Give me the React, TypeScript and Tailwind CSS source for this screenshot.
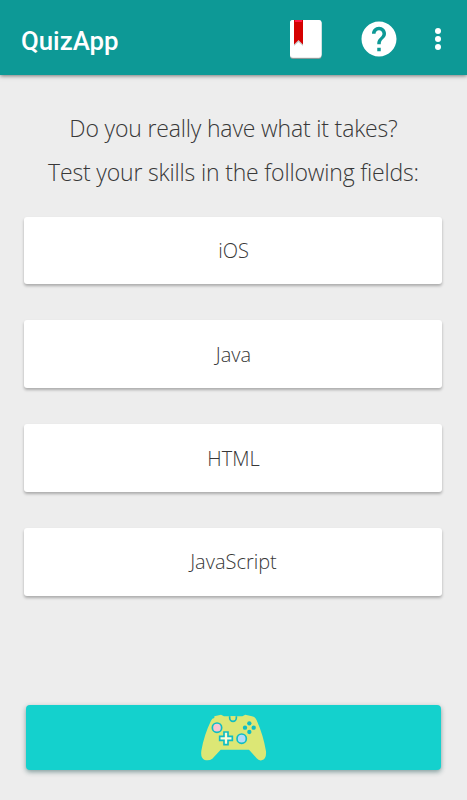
const fields = ["iOS", "Java", "HTML", "JavaScript"];

function BookIcon() {
  return (
    <svg width="34" height="42" viewBox="0 0 34 42" className="block">
      <rect x="1" y="3" width="31.500" height="38" rx="3" fill="#8b9a99" />
      <rect x="1" y="2" width="31.500" height="38" rx="3" fill="#ededed" />
      <rect x="1" y="2" width="31.500" height="37" rx="3" fill="#fff" />
      <path d="M5 23l4.500-4 4.500 4v5l-4.500-4L5 28z" fill="#c9c9c9" />
      <path d="M5 2h9v24.500l-4.500-4.500L5 26.500z" fill="#d50000" />
      <path d="M6 2h7v2H6z" fill="#ff1744" />
    </svg>
  );
}

function HelpIcon() {
  return (
    <svg width="42" height="42" viewBox="0 0 24 24" fill="#fff" className="block">
      <path d="M12 2C6.48 2 2 6.48 2 12s4.48 10 10 10 10-4.48 10-10S17.520 2 12 2zm1 17h-2v-2h2v2zm2.070-7.750-.9.920C13.450 12.900 13 13.500 13 15h-2v-.5c0-1.100.45-2.100 1.170-2.830l1.240-1.260c.37-.36.59-.86.59-1.410 0-1.100-.9-2-2-2s-2 .9-2 2H8c0-2.210 1.790-4 4-4s4 1.790 4 4c0 .88-.36 1.680-.93 2.250z" />
    </svg>
  );
}

function Gamepad() {
  return (
    <svg width="66" height="47" viewBox="33 43 198 141" className="block">
      <path
        d="M73 50l20-5 9 5h55l9-5 20 5q9 1 14 12 20 45 28 93 2 24-13 27-9 2-15-6l-23-26H92l-25 27q-9 7-23 4-13-5-10-28 8-47 29-90 3-7 10-8z"
        fill="#dce775"
      />
      <g stroke="#0fbdc4" strokeWidth="5">
        <path d="M119 50v5a10 10 0 0 0 20 0v-5" fill="#dce775" />
        <circle cx="81" cy="84" r="14" fill="#f8c4d0" />
        <circle cx="155" cy="117" r="14" fill="#b3daf8" />
        <path d="M102 97h12v13h13v12h-13v13h-12v-13H89v-12h13z" fill="#fbfbd8" />
      </g>
      <g fill="#0fbdc4">
        <circle cx="178" cy="71" r="6.500" />
        <circle cx="165" cy="84" r="6.500" />
        <circle cx="191" cy="84" r="6.500" />
        <circle cx="178" cy="97" r="6.500" />
      </g>
    </svg>
  );
}

export default function App() {
  return (
    <div className="flex h-[800px] w-[467px] flex-col overflow-hidden bg-[#ededed] font-['Open_Sans','Noto_Sans',sans-serif] font-light text-[#383838]">
      <header className="flex h-[75px] shrink-0 items-center bg-[#0d9996] pt-[3px] pl-[21px] shadow-[0_1px_4px_rgba(0,0,0,0.5)]">
        <h1 className="w-[268px] pt-[4px] font-[Roboto,sans-serif] text-[25.8px] leading-8 font-medium text-white">QuizApp</h1>
        <BookIcon />
        <div className="ml-[35px]"><HelpIcon /></div>
        <div className="ml-[35px] flex flex-col gap-[2.3px]">
          <span className="size-[5.7px] rounded-full bg-white" />
          <span className="size-[5.7px] rounded-full bg-white" />
          <span className="size-[5.7px] rounded-full bg-white" />
        </div>
      </header>
      <main className="flex flex-1 flex-col px-6 pt-[31px]">
        <div className="text-center text-[23px] leading-[44px] tracking-[-0.17px] whitespace-nowrap">
          <p>Do you really have what it takes?</p>
          <p>Test your skills in the following fields:</p>
        </div>
        <div className="mr-px mt-[22.6px] flex flex-col gap-[36.1px]">
          {fields.map((name) => (
            <button key={name} className="flex h-[67.7px] items-center justify-center rounded-[3px] bg-white pt-px pl-px text-[20px] shadow-[0_2px_3px_rgba(0,0,0,0.28)]">
              {name}
            </button>
          ))}
        </div>
        <button className="mt-auto mr-[2px] mb-[30px] ml-[2px] flex h-[65px] shrink-0 justify-center rounded-[4px] bg-[#14d1cd] pt-[9px] shadow-[0_2px_5px_rgba(0,60,60,0.45)]">
          <Gamepad />
        </button>
      </main>
    </div>
  );
}
